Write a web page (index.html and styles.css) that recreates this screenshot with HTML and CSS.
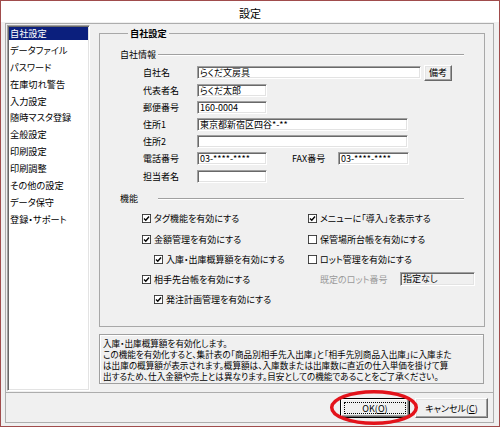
FILE: index.html
```html
<!DOCTYPE html>
<html lang="ja">
<head>
<meta charset="utf-8">
<title>設定</title>
<link rel="stylesheet" href="styles.css">
</head>
<body>
<div class="window">
  <div class="titlebar">設定</div>
  <div class="client">
    <div class="frame">
      <div class="upper">
        <ul class="list">
          <li class="sel">自社設定</li>
          <li>データファイル</li>
          <li>パスワード</li>
          <li>在庫切れ警告</li>
          <li>入力設定</li>
          <li>随時マスタ登録</li>
          <li>全般設定</li>
          <li>印刷設定</li>
          <li>印刷調整</li>
          <li>その他の設定</li>
          <li>データ保守</li>
          <li>登録・サポート</li>
        </ul>
        <div class="main">
          <fieldset class="group">
            <legend>自社設定</legend>
            <div class="sect-head first"><span>自社情報</span><i class="etch"></i></div>
            <div class="form">
              <div class="row"><span class="lbl">自社名</span><span class="input w-name">らくだ文房具</span><span class="btn memo">備考</span></div>
              <div class="row"><span class="lbl">代表者名</span><span class="input w-s">らくだ太郎</span></div>
              <div class="row"><span class="lbl">郵便番号</span><span class="input w-s">160-0004</span></div>
              <div class="row"><span class="lbl">住所1</span><span class="input w-l">東京都新宿区四谷*-**</span></div>
              <div class="row"><span class="lbl">住所2</span><span class="input w-l"></span></div>
              <div class="row"><span class="lbl">電話番号</span><span class="input w-s">03-****-****</span><span class="lbl fax">FAX番号</span><span class="input w-fax">03-****-****</span></div>
              <div class="row"><span class="lbl">担当者名</span><span class="input w-s"></span></div>
            </div>
            <div class="sect-head second"><span>機能</span><i class="etch"></i></div>
            <div class="checks">
              <div class="chk"><svg class="box" viewBox="0 0 10 10"><rect x="0.5" y="0.5" width="9" height="9"/><polyline points="2.2,5 4.2,7 7.8,2.8"/></svg><span>タグ機能を有効にする</span></div>
              <div class="chk"><svg class="box" viewBox="0 0 10 10"><rect x="0.5" y="0.5" width="9" height="9"/><polyline points="2.2,5 4.2,7 7.8,2.8"/></svg><span>メニューに「導入」を表示する</span></div>
              <div class="chk"><svg class="box" viewBox="0 0 10 10"><rect x="0.5" y="0.5" width="9" height="9"/><polyline points="2.2,5 4.2,7 7.8,2.8"/></svg><span>金額管理を有効にする</span></div>
              <div class="chk"><svg class="box" viewBox="0 0 10 10"><rect x="0.5" y="0.5" width="9" height="9"/></svg><span>保管場所台帳を有効にする</span></div>
              <div class="chk indent"><svg class="box" viewBox="0 0 10 10"><rect x="0.5" y="0.5" width="9" height="9"/><polyline points="2.2,5 4.2,7 7.8,2.8"/></svg><span>入庫・出庫概算額を有効にする</span></div>
              <div class="chk"><svg class="box" viewBox="0 0 10 10"><rect x="0.5" y="0.5" width="9" height="9"/></svg><span>ロット管理を有効にする</span></div>
              <div class="chk"><svg class="box" viewBox="0 0 10 10"><rect x="0.5" y="0.5" width="9" height="9"/><polyline points="2.2,5 4.2,7 7.8,2.8"/></svg><span>相手先台帳を有効にする</span></div>
              <div class="lot"><span class="lot-lbl">既定のロット番号</span><span class="input lot-input">指定なし</span></div>
              <div class="chk indent"><svg class="box" viewBox="0 0 10 10"><rect x="0.5" y="0.5" width="9" height="9"/><polyline points="2.2,5 4.2,7 7.8,2.8"/></svg><span>発注計画管理を有効にする</span></div>
              <div></div>
            </div>
          </fieldset>
          <div class="desc">
            <div class="dl">入庫・出庫概算額を有効化します。</div>
            <div class="dl">この機能を有効化すると、集計表の「商品別相手先入出庫」と「相手先別商品入出庫」に入庫また</div>
            <div class="dl">は出庫の概算額が表示されます。概算額は、入庫数または出庫数に直近の仕入単価を掛けて算</div>
            <div class="dl">出するため、仕入金額や売上とは異なります。目安としての機能であることをご了承ください。</div>
          </div>
        </div>
      </div>
      <div class="lower">
        <span class="btn ok"><span class="focus">OK(<u>O</u>)</span></span>
        <span class="btn cancel">キャンセル(<u>C</u>)</span>
      </div>
    </div>
  </div>
</div>
<svg class="mark" width="500" height="427" viewBox="0 0 500 427"><ellipse cx="374" cy="407.5" rx="42.3" ry="15.8"/></svg>
</body>
</html>
```
FILE: styles.css
```css
* { box-sizing: border-box; }
html, body { margin: 0; padding: 0; }
body {
  position: relative;
  width: 500px;
  height: 427px;
  overflow: hidden;
  background: #fff;
  font-family: "Noto Sans CJK JP", "Noto Sans", sans-serif;
  font-size: 9px;
  line-height: 11px;
  color: #000;
  font-feature-settings: "palt";
}
.window {
  width: 500px;
  height: 427px;
  border: 1px solid #a04c4c;
  background: #f0f0f0;
  display: flex;
  flex-direction: column;
}
.titlebar {
  height: 21px;
  flex: none;
  background: #fff;
  text-align: center;
  font-size: 11px;
  line-height: 21px;
  padding-top: 2px;
}
.client {
  flex: 1;
  padding: 1px 5px 3px 4px;
}
.frame {
  height: 100%;
  border: 1px solid #adadad;
  display: flex;
  flex-direction: column;
}
.upper {
  height: 368px;
  flex: none;
  display: flex;
  padding: 1px 0 0 1px;
}
.list {
  list-style: none;
  margin: 0;
  width: 83px;
  height: 366px;
  background: #fff;
  border: 1px solid;
  border-color: #a0a0a0 #fff #fff #a0a0a0;
  box-shadow: inset 1px 1px 0 #696969, inset -1px -1px 0 #e3e3e3;
  padding: 1px 1px 0 1px;
  font-size: 9.2px;
}
.list li {
  height: 13px;
  line-height: 13px;
  margin-bottom: 3.9px;
  padding-left: 1px;
  white-space: nowrap;
}
.list li.sel {
  background: #0b1f7d;
  color: #fff;
}
.main {
  width: 386px;
  margin-left: 9px;
  margin-top: 2px;
  display: flex;
  flex-direction: column;
}
.group {
  margin: 0;
  padding: 0 20px;
  width: 386px;
  height: 300px;
  border: 1px solid #a8a8a8;
  min-inline-size: 0;
}
.group legend {
  margin-left: 8px;
  padding: 0 2px;
  font-weight: bold;
  font-size: 9.2px;
  line-height: 12px;
  height: 12px;
}
.sect-head {
  display: grid;
  grid-template-columns: 38px 1fr;
  align-items: center;
  height: 12px;
  line-height: 12px;
}
.sect-head.first { margin-top: 10px; }
.sect-head.second { margin-top: 8.7px; }
.etch {
  display: block;
  height: 2px;
  border-top: 1px solid #a0a0a0;
  border-bottom: 1px solid #fff;
}
.form {
  margin-top: 3.4px;
  padding-left: 23px;
}
.row {
  display: flex;
  align-items: center;
  height: 17.2px;
}
.lbl {
  width: 54px;
  flex: none;
  white-space: nowrap;
}
.lbl.fax {
  width: 46px;
  margin-left: 25px;
}
.input {
  display: block;
  flex: none;
  height: 13px;
  line-height: 11px;
  background: #fff;
  border: 1px solid;
  border-color: #a0a0a0 #fff #fff #a0a0a0;
  box-shadow: inset 1px 1px 0 #696969, inset -1px -1px 0 #e3e3e3;
  padding-left: 2px;
  white-space: nowrap;
  overflow: hidden;
}
.w-name { width: 224px; }
.w-s { width: 70px; }
.w-l { width: 211px; }
.w-fax { width: 71px; }
.btn {
  display: flex;
  align-items: center;
  justify-content: center;
  flex: none;
  background: #f0f0f0;
  border: 1px solid;
  border-color: #fff #696969 #696969 #fff;
  box-shadow: inset -1px -1px 0 #a0a0a0, inset 1px 1px 0 #e3e3e3;
  white-space: nowrap;
}
.memo {
  width: 28px;
  height: 16px;
  margin-left: 3px;
}
.checks {
  display: grid;
  grid-template-columns: 166px 1fr;
  grid-auto-rows: 20.2px;
  align-items: center;
  padding-left: 22px;
  margin-top: 3.4px;
}
.chk {
  display: flex;
  align-items: center;
  gap: 3px;
  white-space: nowrap;
}
.chk.indent { padding-left: 12px; }
.box {
  width: 9px;
  height: 9px;
  flex: none;
}
.box rect { fill: #fff; stroke: #333; stroke-width: 1; }
.box polyline { fill: none; stroke: #000; stroke-width: 1.5; }
.lot {
  display: flex;
  align-items: center;
  padding-left: 12px;
}
.lot-lbl {
  width: 80px;
  color: #9a9a9a;
  white-space: nowrap;
}
.lot-input {
  width: 75px;
  height: 14px;
  background: #f0f0f0;
  line-height: 12px;
}
.desc {
  margin-top: 7px;
  width: 385px;
  height: 50px;
  border: 1px solid #a0a0a0;
  box-shadow: inset 1px 1px 0 #fff;
  padding: 3px 0 0 3px;
  font-size: 8.6px;
  overflow: hidden;
}
.dl {
  height: 11px;
  line-height: 11px;
  white-space: nowrap;
}
.lower {
  flex: 1;
  border-top: 1px solid #adadad;
  display: flex;
  justify-content: flex-end;
  align-items: flex-start;
  gap: 5px;
  padding: 5px 5px 0 0;
}
.ok, .cancel {
  height: 20px;
}
.ok {
  width: 70px;
  border-color: #000;
  box-shadow: inset 1px 1px 0 #fff, inset -1px -1px 0 #696969, inset -2px -2px 0 #a0a0a0;
  padding: 3px;
}
.ok .focus {
  display: flex;
  align-items: center;
  justify-content: center;
  width: 100%;
  height: 100%;
  border: 1px dotted #000;
}
.cancel { width: 73px; }
.mark {
  position: absolute;
  left: 0;
  top: 0;
  pointer-events: none;
}
.mark ellipse {
  fill: none;
  stroke: #e3131b;
  stroke-width: 3.5;
}
```
